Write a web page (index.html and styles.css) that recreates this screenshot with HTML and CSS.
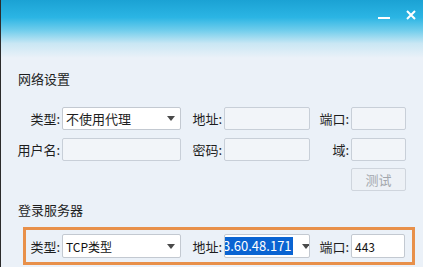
FILE: index.html
```html
<!DOCTYPE html>
<html lang="zh-CN">
<head>
  <meta charset="UTF-8">
  <title>网络设置</title>
  <link rel="stylesheet" href="styles.css">
</head>
<body>
  <div class="window">
    <div class="titlebar">
      <span class="btn-min"></span>
      <svg class="btn-close" width="10" height="10" viewBox="0 0 10 10">
        <path d="M1 1 L9 9 M9 1 L1 9" stroke="#fff" stroke-width="2"/>
      </svg>
    </div>

    <div class="section-title first">网络设置</div>
    <div class="form">
      <label class="lbl">类型:</label>
      <div class="combo"><span>不使用代理</span><i class="arrow"></i></div>
      <label class="lbl">地址:</label>
      <div class="field"></div>
      <label class="lbl">端口:</label>
      <div class="field"></div>

      <label class="lbl">用户名:</label>
      <div class="field"></div>
      <label class="lbl">密码:</label>
      <div class="field"></div>
      <label class="lbl">域:</label>
      <div class="field"></div>

      <div class="test-cell"><button class="test" disabled>测试</button></div>
    </div>

    <div class="section-title second">登录服务器</div>
    <div class="server-box">
      <div class="form server">
        <label class="lbl">类型:</label>
        <div class="combo small"><span>TCP类型</span><i class="arrow"></i></div>
        <label class="lbl">地址:</label>
        <div class="combo small addr"><span class="sel">3.60.48.171</span><i class="arrow"></i></div>
        <label class="lbl">端口:</label>
        <div class="field white small"><span>443</span></div>
      </div>
    </div>
  </div>
</body>
</html>
```

FILE: styles.css
```css
body {
  margin: 0;
  padding: 0;
  font-family: "Noto Sans CJK SC", "Noto Sans", sans-serif;
  font-size: 13px;
  color: #1e1e1e;
}
.window {
  width: 422px;
  height: 267px;
  border-left: 1px solid #2b2b2b;
  background-color: #ebf1f8;
  overflow: hidden;
}
.titlebar {
  position: relative;
  height: 58px;
  background: linear-gradient(to bottom, #1ba2d4 0%, #2bb5e4 30%, #6fcdec 52%, #c9e7f4 75%, #ebf1f8 100%);
}
.btn-min {
  position: absolute;
  left: 377px;
  top: 17px;
  width: 12px;
  height: 2px;
  background-color: #fff;
}
.btn-close {
  position: absolute;
  left: 405px;
  top: 10px;
}
.section-title {
  padding-left: 17px;
  height: 18px;
  line-height: 18px;
}
.section-title.first {
  margin-top: 12px;
}
.section-title.second {
  margin-top: 9px;
}
.form {
  display: grid;
  grid-template-columns: 45px 119px 43px 86px 41px 55px;
  grid-auto-rows: 23px;
  row-gap: 8px;
  padding-left: 16px;
  margin-top: 19px;
}
.lbl {
  display: flex;
  align-items: center;
  justify-content: flex-end;
  padding-right: 2px;
  white-space: nowrap;
}
.field,
.combo {
  box-sizing: border-box;
  border: 1px solid #c8cfd8;
  border-radius: 2px;
  background-color: #f2f5f9;
  display: flex;
  align-items: center;
  padding-left: 3px;
  overflow: hidden;
  white-space: nowrap;
}
.combo {
  position: relative;
  background-color: #fff;
  border-color: #c3c9d1;
}
.combo span {
  flex: 1;
}
.arrow {
  width: 0;
  height: 0;
  border-left: 4px solid transparent;
  border-right: 4px solid transparent;
  border-top: 5px solid #4a4a4a;
  margin-right: 5px;
}
.test-cell {
  grid-column: 6;
  row-gap: 0;
  margin-top: -1px;
}
.test {
  width: 55px;
  height: 23px;
  border: 1px solid #cfd5dd;
  border-radius: 2px;
  background-color: #edf1f6;
  color: #a3a7ad;
  font-family: inherit;
  font-size: 13px;
  padding: 0;
}
.server-box {
  margin: 8px 0 0 22px;
  width: 392px;
  height: 38px;
  box-sizing: border-box;
  border: 3px solid #e8904a;
}
.form.server {
  margin-top: 4px;
  margin-left: -25px;
  grid-template-columns: 45px 119px 43px 86px 41px 54px;
  grid-auto-rows: 24px;
}
.small {
  font-size: 12px;
  color: #111;
}
.field.white {
  background-color: #fff;
  border-color: #c3c9d1;
}
.addr {
  padding-left: 0;
}
.sel {
  flex: 0 0 auto !important;
  background-color: #0a64d2;
  color: #fff;
  line-height: 18px;
  padding: 0 1px;
  margin-left: -3px;
  margin-right: 9px;
  font-size: 13px;
}
```
